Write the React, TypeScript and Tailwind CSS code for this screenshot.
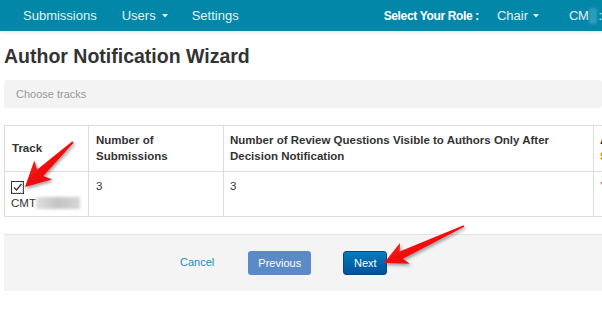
import React from "react";

function Caret() {
  return (
    <svg width="6" height="4" viewBox="0 0 6 4" className="inline-block">
      <polygon points="0,0 6,0 3,3.5" fill="currentColor" />
    </svg>
  );
}

function arrowPoints(x1: number, y1: number, x2: number, y2: number, hl: number, hw: number, sw: number) {
  const dx = x2 - x1;
  const dy = y2 - y1;
  const L = Math.sqrt(dx * dx + dy * dy);
  const ux = dx / L;
  const uy = dy / L;
  const nx = -uy;
  const ny = ux;
  const local: [number, number][] = [
    [0, -0.9],
    [L - hl + 4, -sw],
    [L - hl, -hw],
    [L, 0],
    [L - hl, hw],
    [L - hl + 4, sw],
    [0, 0.9],
  ];
  return local
    .map(([a, b]) => `${(x1 + ux * a + nx * b).toFixed(1)},${(y1 + uy * a + ny * b).toFixed(1)}`)
    .join(" ");
}

function Arrows() {
  return (
    <svg
      className="pointer-events-none absolute left-0 top-0"
      width="602"
      height="309"
      viewBox="0 0 602 309"
    >
      <defs>
        <filter id="sh" x="-20%" y="-20%" width="140%" height="140%">
          <feDropShadow dx="1.5" dy="2" stdDeviation="1.5" floodColor="#000" floodOpacity="0.35" />
        </filter>
        <linearGradient id="rg" x1="0" y1="0" x2="1" y2="1">
          <stop offset="0" stopColor="#ff2020" />
          <stop offset="1" stopColor="#e00000" />
        </linearGradient>
      </defs>
      <polygon points={arrowPoints(73, 142, 25, 187, 25, 13, 4.5)} fill="url(#rg)" filter="url(#sh)" />
      <polygon points={arrowPoints(464, 226, 384, 263, 23, 11.5, 4)} fill="url(#rg)" filter="url(#sh)" />
    </svg>
  );
}

export default function App() {
  return (
    <div className="relative h-[309px] w-[602px] overflow-hidden bg-white font-['Liberation_Sans',Arial,sans-serif] text-[#333]">
      {/* Navbar */}
      <div className="relative z-10 flex h-[31px] items-center whitespace-nowrap bg-[#0287a8] pl-[23px] text-[13px] text-[#e4f1f5] shadow-[0_2px_3px_rgba(0,0,0,0.08)]">
        <span>Submissions</span>
        <span className="ml-[25px] flex items-center">
          Users<span className="ml-[6px] flex"><Caret /></span>
        </span>
        <span className="ml-[24px]">Settings</span>
        <span className="ml-[145px] text-[12px] font-bold tracking-[-0.35px] text-white">Select Your Role :</span>
        <span className="ml-[18px] flex items-center">
          Chair<span className="ml-[5px] flex"><Caret /></span>
        </span>
        <span className="ml-[30px] tracking-[-0.5px]">CM</span>
        <span className="ml-[1px] h-[16px] w-[14px] bg-[#2b9cb9] blur-[1px]" />
        <span className="ml-[1px]">:</span>
      </div>

      {/* Content */}
      <div className="pl-[4px]">
        <h1 className="mt-[14px] text-[19.5px] font-bold leading-[22px] text-[#333]">
          Author Notification Wizard
        </h1>

        <div className="mt-[13px] flex h-[28px] items-center rounded-[3px] bg-[#f3f3f3] pl-[12px] text-[11px] text-[#999]">
          Choose tracks
        </div>

        {/* Table */}
        <div className="mt-[17px] grid w-[800px] grid-cols-[84px_135px_370px_211px] border-l border-t border-[#ddd] text-[11.5px] leading-[16px]">
          <div className="flex h-[46px] items-center border-b border-r border-[#ddd] pb-[1px] pl-[7px] font-bold">
            Track
          </div>
          <div className="flex h-[46px] items-center border-b border-r border-[#ddd] pb-[1px] pl-[7px] font-bold">
            <span>
              Number of
              <br />
              Submissions
            </span>
          </div>
          <div className="flex h-[46px] items-center border-b border-r border-[#ddd] pb-[1px] pl-[6px] font-bold">
            <span>
              Number of Review Questions Visible to Authors Only After
              <br />
              Decision Notification
            </span>
          </div>
          <div className="flex h-[46px] items-center border-b border-r border-[#ddd] pb-[1px] pl-[6px] font-bold">
            <span>
              Author
              <br />
              <span className="text-[#e08a00]">Settings</span>
            </span>
          </div>

          <div className="h-[45px] border-b border-r border-[#ddd] pl-[6px] pt-[9px]">
            <svg width="13" height="13" viewBox="0 0 13 13" className="block">
              <rect x="0.5" y="0.5" width="12" height="12" fill="#fff" stroke="#333" />
              <path d="M3 6.5 L5.5 9 L10.5 3" fill="none" stroke="#333" strokeWidth="1.3" />
              <path d="M1 12 H12 V1" fill="none" stroke="#888" strokeDasharray="1 1" />
            </svg>
            <div className="mt-[1px] flex items-center text-[11.5px] leading-[16px]">
              <span>CMT</span>
              <span className="h-[12px] w-[44px] bg-gradient-to-r from-[#e0e0e0] via-[#c4c4c4] to-[#d6d6d6] blur-[1.5px]" />
            </div>
          </div>
          <div className="h-[45px] border-b border-r border-[#ddd] pl-[7px] pt-[6px]">3</div>
          <div className="h-[45px] border-b border-r border-[#ddd] pl-[6px] pt-[6px]">3</div>
          <div className="h-[45px] border-b border-r border-[#ddd] pl-[6px] pt-[6px] text-[#d9534f]">
            Yes
          </div>
        </div>

        {/* Footer */}
        <div className="mt-[17px] flex h-[57px] items-center border-t border-[#e3e3e3] bg-[#f4f4f4] pl-[176px] text-[11px]">
          <span className="pb-[2px] text-[#1b8dbb]">Cancel</span>
          <span className="ml-[34px] flex h-[24px] w-[63px] items-center justify-center rounded-[3px] bg-[#5b8ac7] text-white">
            Previous
          </span>
          <span className="ml-[32px] flex h-[24px] w-[44px] items-center justify-center rounded-[3px] border border-[#064a85] bg-gradient-to-b from-[#0b7cb8] to-[#00519c] text-white">
            Next
          </span>
        </div>
      </div>

      <Arrows />
    </div>
  );
}
